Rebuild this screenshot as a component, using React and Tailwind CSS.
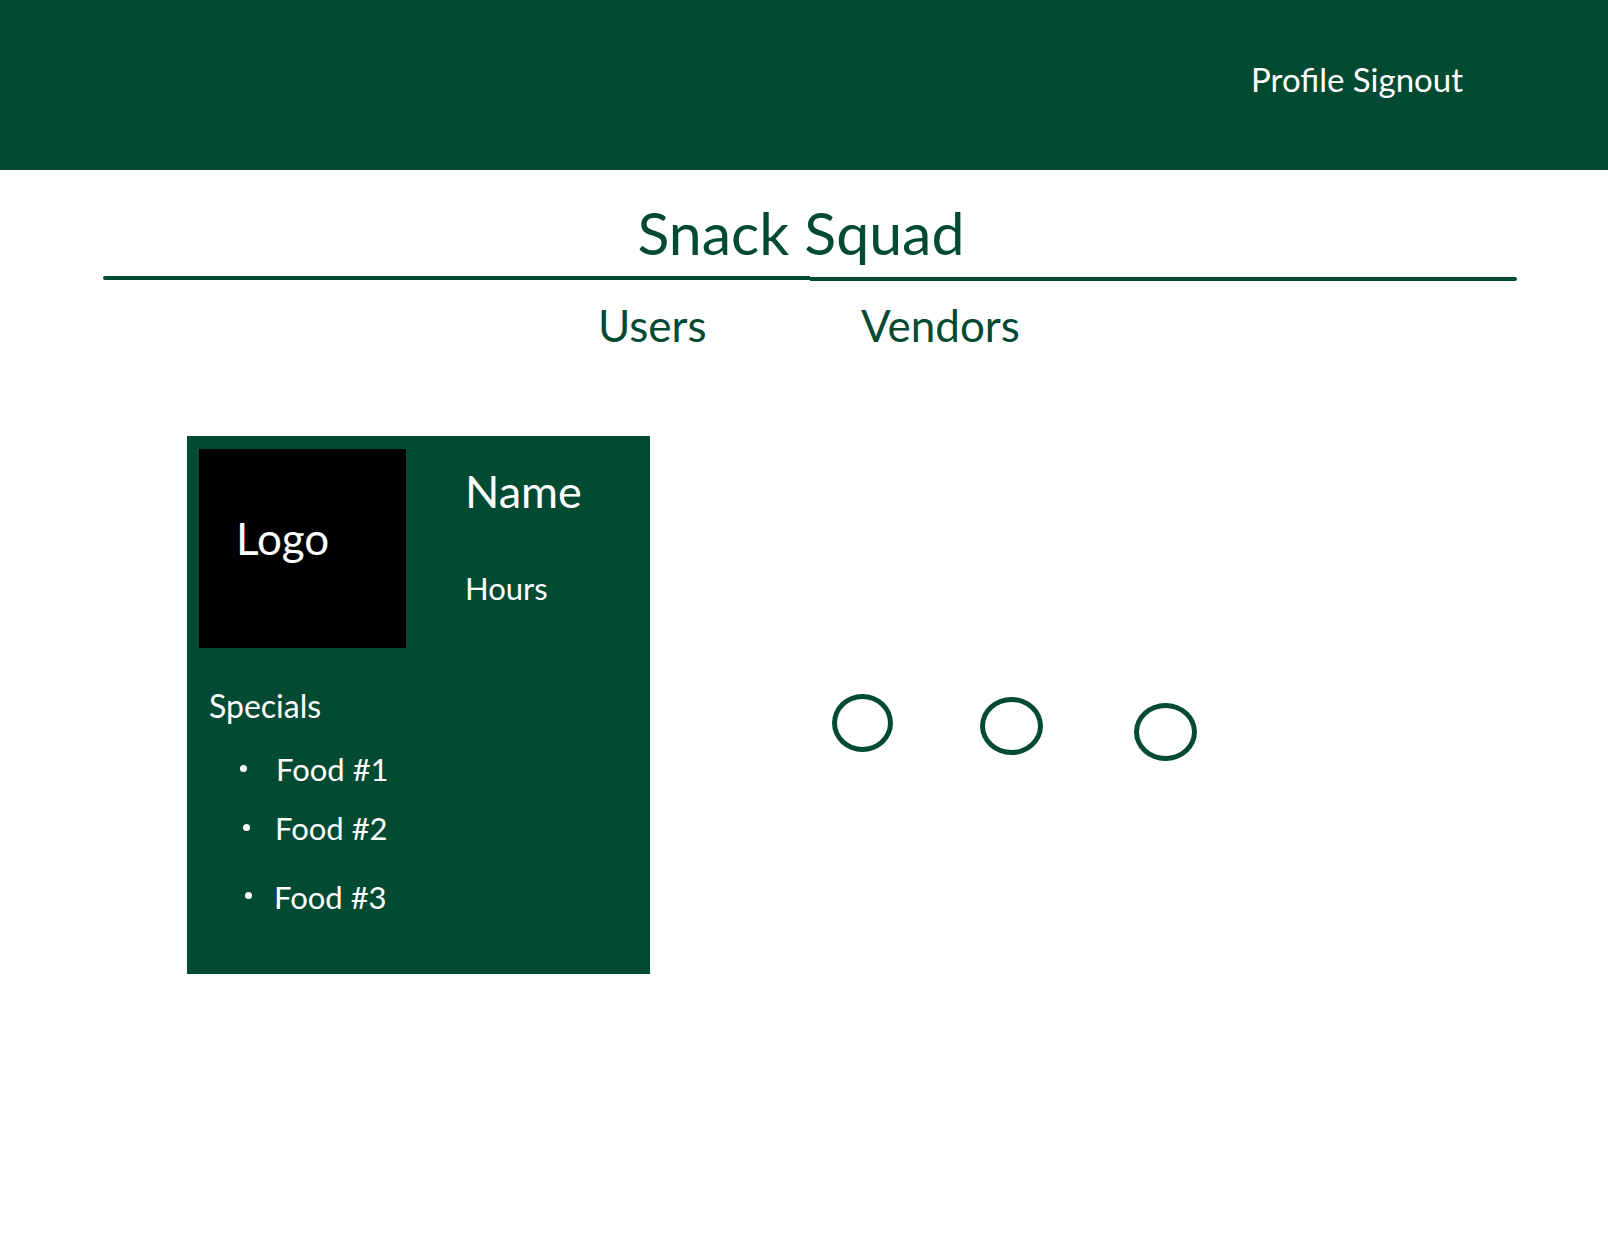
export default function App() {
  const green = "bg-[#034a33]";
  return (
    <div className="min-h-[1242px] w-[1608px] bg-white" style={{ fontFamily: "Lato, 'Open Sans', sans-serif" }}>
      <header className={`${green} h-[170px] flex justify-end pt-[63px] pr-[145px]`}>
        <span className="text-white text-[33px] leading-none">Profile Signout</span>
      </header>
      <div className="flex justify-center mt-[33px] pr-[6px]">
        <h1 className="text-[#034a33] text-[59px] leading-none">Snack Squad</h1>
      </div>
      <div className="flex ml-[103px] mr-[91px] mt-[14px] h-[5px]">
        <div className="flex-1 h-[4px] bg-[#034a33] rounded-l-full"></div>
        <div className="flex-1 h-[4px] mt-[1px] bg-[#034a33] rounded-r-full"></div>
      </div>
      <nav className="flex pl-[598px] mt-[22px] text-[#034a33] text-[44px] leading-none">
        <span className="w-[263px]">Users</span>
        <span>Vendors</span>
      </nav>
      <div className="flex items-start mt-[89px] ml-[187px]">
        <div className={`${green} w-[463px] h-[538px] pt-[13px] pl-[12px] text-white`}>
          <div className="flex">
            <div className="w-[207px] h-[199px] bg-black pl-[37px] pt-[67px] text-[44px] leading-none">Logo</div>
            <div className="ml-[59px] pt-[20px] flex flex-col">
              <span className="text-[45px] leading-none">Name</span>
              <span className="text-[31px] leading-none mt-[59px]">Hours</span>
            </div>
          </div>
          <div className="pl-[10px] mt-[42px] text-[32px] leading-none">Specials</div>
          <ul className="text-[31px] leading-none">
            <li className="flex items-start mt-[32px]">
              <span className="ml-[41px] mt-[11px] w-[7px] h-[7px] rounded-full bg-white"></span>
              <span className="ml-[29px]">Food #1</span>
            </li>
            <li className="flex items-start mt-[28px]">
              <span className="ml-[44px] mt-[11px] w-[7px] h-[7px] rounded-full bg-white"></span>
              <span className="ml-[25px]">Food #2</span>
            </li>
            <li className="flex items-start mt-[38px]">
              <span className="ml-[46px] mt-[10px] w-[7px] h-[7px] rounded-full bg-white"></span>
              <span className="ml-[22px]">Food #3</span>
            </li>
          </ul>
        </div>
        <div className="ml-[182px] mt-[258px] w-[61px] h-[58px] rounded-[50%] border-[5px] border-[#034a33]"></div>
        <div className="ml-[87px] mt-[261px] w-[63px] h-[58px] rounded-[50%] border-[5px] border-[#034a33]"></div>
        <div className="ml-[91px] mt-[267px] w-[63px] h-[58px] rounded-[50%] border-[5px] border-[#034a33]"></div>
      </div>
    </div>
  );
}
